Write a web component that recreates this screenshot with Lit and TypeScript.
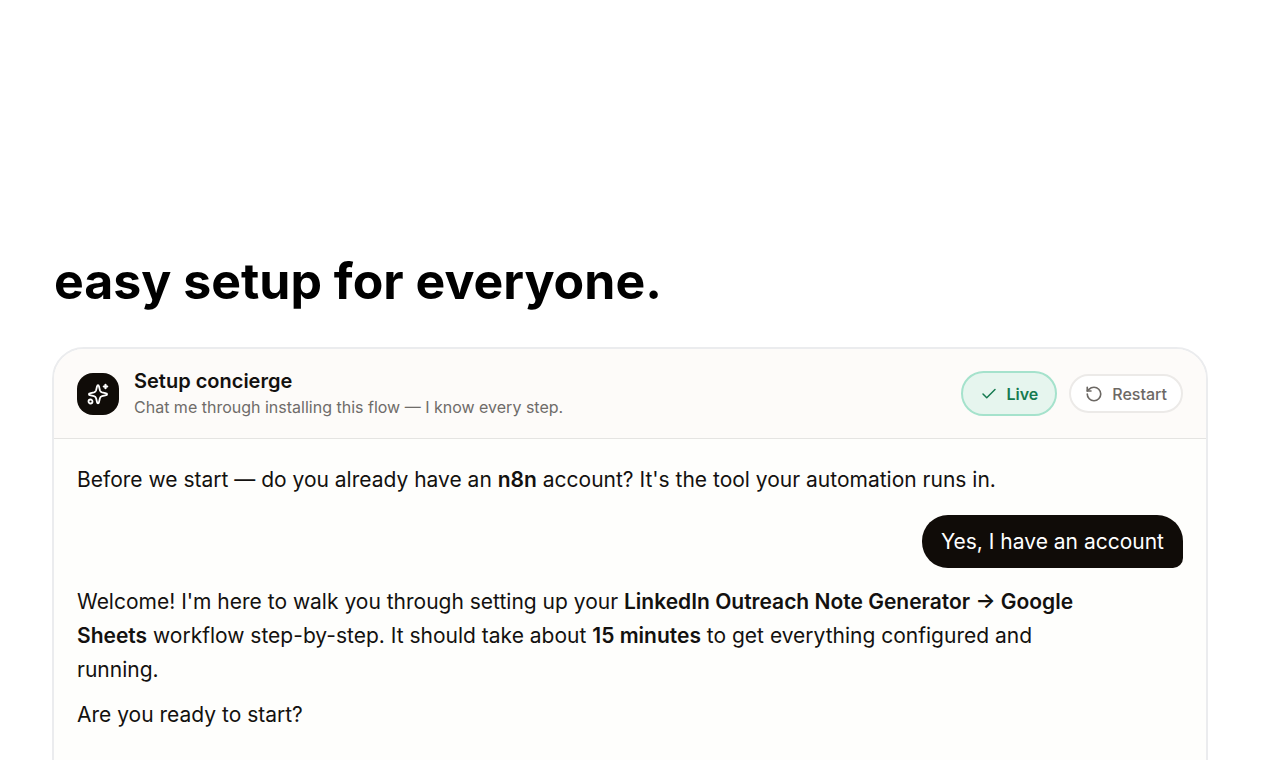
import { LitElement, html, css } from "lit";
import { customElement } from "lit/decorators.js";

@customElement("app-root")
export class AppRoot extends LitElement {
  static styles = css`
    :host { display: block; height: 100vh; overflow: hidden; background: #fff; color: #13110f; font-family: Inter, "Liberation Sans", sans-serif; }
    * { box-sizing: border-box; }
    main { padding: 249px 62px 0 52px; }
    h1 { margin: 0; padding-left: 2px; font-size: 50px; line-height: 64px; font-weight: 700; color: #000; }
    .card { margin-top: 34px; min-height: 520px; border: 2px solid #ebecee; border-radius: 32px; background: #fefefc; overflow: hidden; }
    header { display: flex; align-items: center; gap: 15px; padding: 18px 23px; background: #fdfbf9; border-bottom: 1px solid #e5e4e2; }
    .logo { display: grid; place-items: center; width: 42px; height: 42px; border-radius: 16px; background: #100c08; color: #fff; flex: none; }
    .titles { flex: 1; }
    h2 { margin: 0; font-size: 20px; line-height: 28px; font-weight: 600; }
    .sub { margin: 0; font-size: 16px; line-height: 25px; color: #6f6c69; }
    .actions { display: flex; align-items: center; gap: 12px; }
    .live, .restart { display: flex; align-items: center; gap: 9px; font: 500 16px/24px Inter, sans-serif; border-radius: 24px; }
    .live { height: 45px; padding: 0 17px; border: 2px solid #a5e2cc; background: #e6f5ee; color: #167a50; font-weight: 600; }
    .restart { height: 39px; padding: 0 14px; border: 2px solid #eceae8; background: #fff; color: #6c6864; }
    .chat { display: flex; flex-direction: column; padding: 24px 23px; font-size: 21px; line-height: 34px; }
    p { margin: 0; }
    b { font-weight: 600; }
    .mine { align-self: flex-end; margin: 18px 0 17px; padding: 10px 19px 9px; border-radius: 26px 26px 10px 26px; background: #100c08; color: #fff; }
    .reply { max-width: 1000px; }
    .next { margin-top: 11px; }
  `;

  render() {
    return html`<main>
      <h1>easy setup for everyone.</h1>
      <section class="card">
        <header>
          <span class="logo"><svg width="24" height="24" viewBox="0 0 24 24" fill="none" stroke="currentColor" stroke-width="1.8" stroke-linecap="round" stroke-linejoin="round"><path d="M12 3.2c.5 0 .8.3.9.8l1 4.300a3 3 0 0 0 2.100 2.100l4.300 1c1 .2 1 1.600 0 1.800l-4.300 1a3 3 0 0 0-2.100 2.100l-1 4.200c-.2 1-1.600 1-1.800 0l-1-4.200a3 3 0 0 0-2.100-2.100l-4.300-1c-1-.2-1-1.600 0-1.800l4.300-1a3 3 0 0 0 2.100-2.100l1-4.300c.1-.5.4-.8.900-.8z"/><path stroke-width="2.200" d="M19.500 2.800v3.400M21.200 4.500h-3.400"/><circle cx="4.500" cy="19.500" r="2"/></svg></span>
          <div class="titles"><h2>Setup concierge</h2><p class="sub">Chat me through installing this flow — I know every step.</p></div>
          <div class="actions">
            <span class="live"><svg width="18" height="18" viewBox="0 0 24 24" fill="none" stroke="currentColor" stroke-width="2" stroke-linecap="round" stroke-linejoin="round"><path d="M20 6 9 17l-5-5"/></svg>Live</span>
            <button class="restart" type="button"><svg width="18" height="18" viewBox="0 0 24 24" fill="none" stroke="currentColor" stroke-width="2.200" stroke-linecap="round" stroke-linejoin="round"><path d="M3 12a9 9 0 1 0 9-9 9.75 9.75 0 0 0-6.74 2.74L3 8"/><path d="M3 3v5h5"/></svg>Restart</button>
          </div>
        </header>
        <div class="chat">
          <p>Before we start — do you already have an <b>n8n</b> account? It's the tool your automation runs in.</p>
          <p class="mine">Yes, I have an account</p>
          <p class="reply">Welcome! I'm here to walk you through setting up your <b>LinkedIn Outreach Note Generator → Google Sheets</b> workflow step-by-step. It should take about <b>15 minutes</b> to get everything configured and running.</p>
          <p class="next">Are you ready to start?</p>
        </div>
      </section>
    </main>`;
  }
}
